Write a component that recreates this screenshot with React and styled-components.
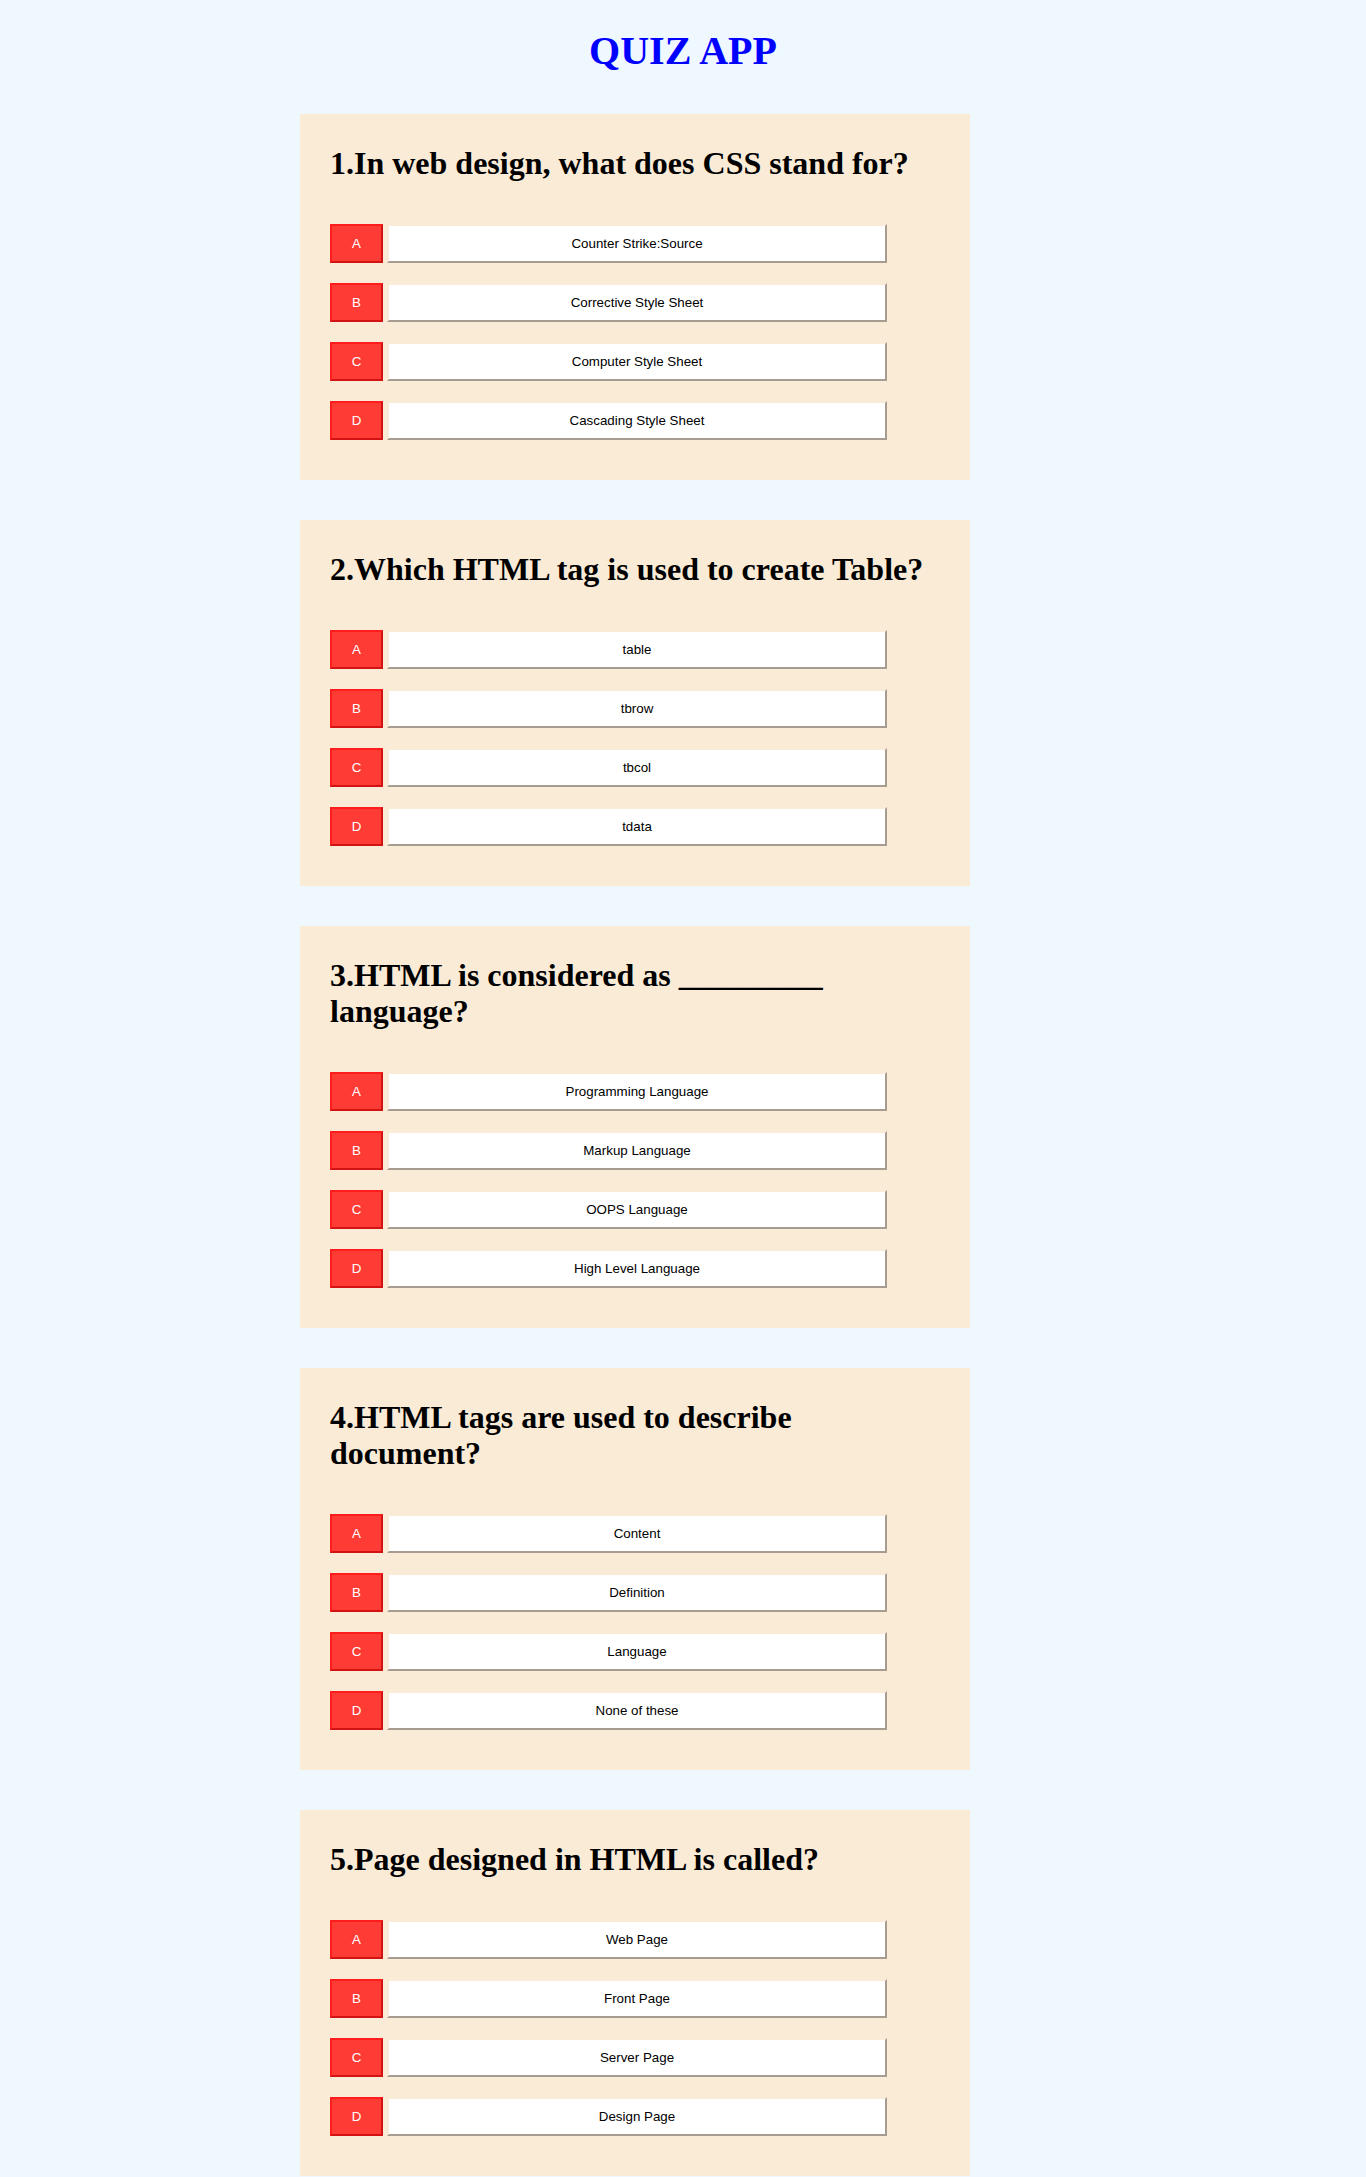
import React from 'react'
import styled, { createGlobalStyle } from 'styled-components'

const questions = [
    {
        q: "1.In web design, what does CSS stand for?",
        options: ["Counter Strike:Source", "Corrective Style Sheet", "Computer Style Sheet", "Cascading Style Sheet"]
    },
    {
        q: "2.Which HTML tag is used to create Table?",
        options: ["table", "tbrow", "tbcol", "tdata"]
    },
    {
        q: "3.HTML is considered as _________ language?",
        options: ["Programming Language", "Markup Language", "OOPS Language", "High Level Language"]
    },
    {
        q: "4.HTML tags are used to describe document?",
        options: ["Content", "Definition", "Language", "None of these"]
    },
    {
        q: "5.Page designed in HTML is called?",
        options: ["Web Page", "Front Page", "Server Page", "Design Page"]
    }
]

const letters = ["A", "B", "C", "D"]

function App() {
    return (
        <>
            <GlobalStyle />
            <Title>QUIZ APP</Title>
            <QuizList>
                {questions.map((item, i) => (
                    <Card key={i}>
                        <Question>{item.q}</Question>
                        <Options>
                            {item.options.map((opt, j) => (
                                <OptionRow key={j}>
                                    <LetterBox>{letters[j]}</LetterBox>
                                    <OptionButton>{opt}</OptionButton>
                                </OptionRow>
                            ))}
                        </Options>
                    </Card>
                ))}
            </QuizList>
        </>
    )
}

const GlobalStyle = createGlobalStyle`
    body {
        margin: 0;
        background-color: #f0f8ff;
        font-family: "Liberation Serif", "Times New Roman", serif;
    }
`

const Title = styled.h1`
    margin: 28px 0 0;
    font-family: "Liberation Serif", "Times New Roman", serif;
    font-size: 40px;
    line-height: 46px;
    font-weight: bold;
    color: #0000ff;
    text-align: center;
`

const QuizList = styled.div`
    display: flex;
    flex-direction: column;
    gap: 40px;
    padding-top: 40px;
    padding-left: 300px;
`

const Card = styled.div`
    width: 670px;
    box-sizing: border-box;
    background-color: #faebd7;
    padding: 31px 30px 40px;
`

const Question = styled.h2`
    margin: 0 0 43px;
    font-family: "Liberation Serif", "Times New Roman", serif;
    font-size: 32px;
    line-height: 36px;
    font-weight: bold;
    color: #000;
`

const Options = styled.div`
    display: flex;
    flex-direction: column;
    gap: 20px;
`

const OptionRow = styled.div`
    display: flex;
    gap: 4px;
`

const LetterBox = styled.button`
    width: 53px;
    height: 39px;
    box-sizing: border-box;
    padding: 0;
    border: 2px solid;
    border-color: #ff1c1c #d31313 #d31313 #ff1c1c;
    background-color: #ff3b35;
    color: #fff;
    font-family: "Liberation Sans", Arial, sans-serif;
    font-size: 13.33px;
    cursor: pointer;
`

const OptionButton = styled.button`
    width: 500px;
    height: 39px;
    box-sizing: border-box;
    padding: 0;
    border: 2px solid;
    border-color: #faebd7 #a69c8f #a69c8f #faebd7;
    background-color: #fff;
    color: #000;
    font-family: "Liberation Sans", Arial, sans-serif;
    font-size: 13.33px;
    text-align: center;
    cursor: pointer;
`

export default App
